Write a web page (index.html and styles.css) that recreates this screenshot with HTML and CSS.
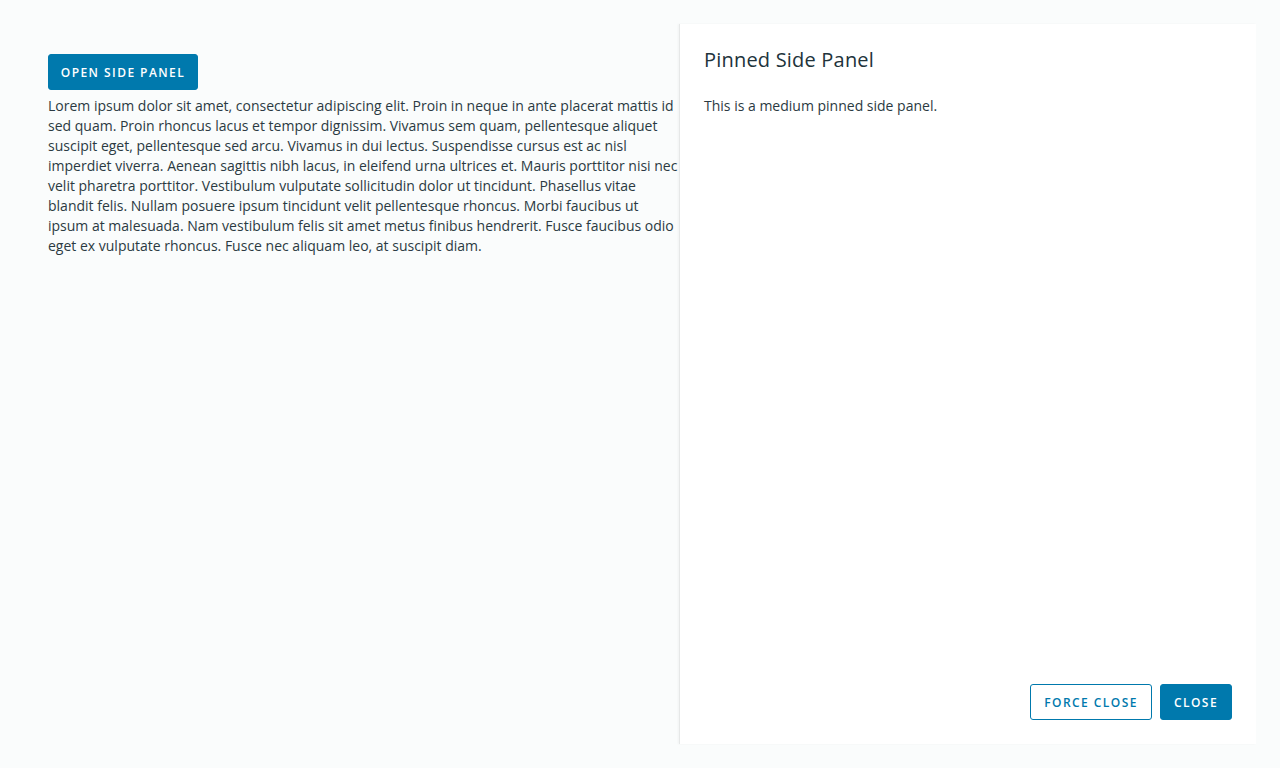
FILE: index.html
```html
<!DOCTYPE html>
<html lang="en">
<head>
<meta charset="utf-8">
<title>Pinned Side Panel</title>
<link rel="stylesheet" href="styles.css">
</head>
<body>
<div class="layout">
  <main class="content">
    <button class="btn btn-primary open-btn">Open side panel</button>
    <p class="lorem">Lorem ipsum dolor sit amet, consectetur adipiscing elit. Proin in neque in ante placerat mattis id sed quam. Proin rhoncus lacus et tempor dignissim. Vivamus sem quam, pellentesque aliquet suscipit eget, pellentesque sed arcu. Vivamus in dui lectus. Suspendisse cursus est ac nisl imperdiet viverra. Aenean sagittis nibh lacus, in eleifend urna ultrices et. Mauris porttitor nisi nec velit pharetra porttitor. Vestibulum vulputate sollicitudin dolor ut tincidunt. Phasellus vitae blandit felis. Nullam posuere ipsum tincidunt velit pellentesque rhoncus. Morbi faucibus ut ipsum at malesuada. Nam vestibulum felis sit amet metus finibus hendrerit. Fusce faucibus odio eget ex vulputate rhoncus. Fusce nec aliquam leo, at suscipit diam.</p>
  </main>
  <aside class="side-panel">
    <h3 class="panel-title">Pinned Side Panel</h3>
    <div class="panel-body">
      <p>This is a medium pinned side panel.</p>
    </div>
    <div class="panel-footer">
      <button class="btn btn-outline">Force close</button>
      <button class="btn btn-primary">Close</button>
    </div>
  </aside>
</div>
</body>
</html>
```

FILE: styles.css
```css
* { box-sizing: border-box; }
html, body { margin: 0; height: 100%; }
body {
  background: #fafcfc;
  font-family: "Open Sans", "Liberation Sans", sans-serif;
  color: #2b3a42;
}
.layout {
  display: flex;
  height: 100vh;
  padding: 24px;
}
.content {
  flex: 1;
  min-width: 0;
  padding: 30px 0 0 24px;
}
.btn {
  height: 36px;
  padding: 0;
  border-radius: 3px;
  font-family: "Open Sans", "Liberation Sans", sans-serif;
  font-size: 12px;
  font-weight: 600;
  letter-spacing: 0.12em;
  text-transform: uppercase;
  cursor: pointer;
  display: inline-flex;
  align-items: center;
  justify-content: center;
}
.btn-primary {
  background: #0079ad;
  border: 1px solid #0079ad;
  color: #fff;
}
.btn-outline {
  background: #fff;
  border: 1px solid #0079ad;
  color: #0079ad;
}
.open-btn { width: 150px; margin-bottom: 6px; }
.lorem {
  margin: 0;
  font-size: 14px;
  line-height: 20px;
  color: #2b3a42;
}
.side-panel {
  width: 577px;
  flex: none;
  background: #fff;
  border-left: 1px solid #e6e8e8;
  box-shadow: -1px 0 2px rgba(0,0,0,0.04);
  display: flex;
  flex-direction: column;
  padding: 24px;
}
.panel-title {
  margin: 0;
  font-size: 20px;
  font-weight: 400;
  letter-spacing: 0.01em;
  line-height: 24px;
  color: #21333b;
}
.panel-body { flex: 1; padding-top: 24px; }
.panel-body p {
  margin: 0;
  font-size: 14px;
  line-height: 20px;
  color: #2b3a42;
}
.panel-footer {
  display: flex;
  justify-content: flex-end;
  gap: 8px;
}
.panel-footer .btn-outline { width: 122px; }
.panel-footer .btn-primary { width: 72px; }
```
